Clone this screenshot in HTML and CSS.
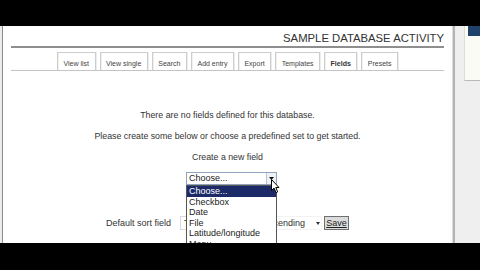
FILE: index.html
```html
<!DOCTYPE html>
<html>
<head>
<meta charset="utf-8">
<link rel="stylesheet" href="styles.css">
</head>
<body>
<div class="screen">
  <div class="bar"></div>
  <div class="stage">
    <main class="main">
      <h1 class="title">SAMPLE DATABASE ACTIVITY</h1>
      <div class="rule"></div>
      <nav class="tabs">
        <span class="tab">View list</span>
        <span class="tab">View single</span>
        <span class="tab">Search</span>
        <span class="tab">Add entry</span>
        <span class="tab">Export</span>
        <span class="tab">Templates</span>
        <span class="tab active">Fields</span>
        <span class="tab">Presets</span>
      </nav>
      <p class="msg first">There are no fields defined for this database.</p>
      <p class="msg">Please create some below or choose a predefined set to get started.</p>
      <p class="msg">Create a new field</p>
      <div class="create">
        <div class="select newfield">
          <span class="sel-text">Choose...</span>
          <span class="sel-btn"><svg width="5" height="3" viewBox="0 0 5 3"><path d="M0 0H5L2.5 3Z" fill="#111"/></svg></span>
          <ul class="dropdown">
            <li class="hl">Choose...</li>
            <li>Checkbox</li>
            <li>Date</li>
            <li>File</li>
            <li>Latitude/longitude</li>
            <li>Menu</li>
          </ul>
          <svg class="cursor" width="9" height="15" viewBox="0 0 9 15"><path d="M0.5 0.5V11.5L3 9L5 13.6L6.7 12.9L4.8 8.5H8Z" fill="#fff" stroke="#000" stroke-width="1"/></svg>
        </div>
      </div>
      <div class="sort">
        <span class="sort-label">Default sort field</span>
        <span class="field s1">Time added</span>
        <span class="field s2">Ascending<svg class="mini" width="4" height="3" viewBox="0 0 4 3"><path d="M0 0H4L2 3Z" fill="#333"/></svg></span>
        <button class="save">Save</button>
      </div>
    </main>
    <aside class="side">
      <div class="block"><div class="blue"></div></div>
    </aside>
  </div>
  <div class="bar"></div>
</div>
</body>
</html>
```
FILE: styles.css
```css
html, body {
  margin: 0;
  padding: 0;
  background: #000;
}
.screen {
  width: 480px;
  height: 270px;
  display: flex;
  flex-direction: column;
  font-family: "Liberation Sans", Arial, sans-serif;
  color: #333;
}
.bar {
  height: 26px;
  background: #000;
  flex: none;
}
.bar:last-child {
  height: 27px;
}
.stage {
  height: 217px;
  display: flex;
  background: #ececec;
  overflow: hidden;
  position: relative;
}
.main {
  margin-left: 2px;
  width: 451px;
  box-sizing: border-box;
  border-left: 1px solid #8c8c8c;
  border-right: 1px solid #dcdcdc;
  background: #fff;
  padding: 0 8px;
}
.title {
  margin: 0;
  padding-top: 6px;
  font-size: 11.3px;
  line-height: 13px;
  font-weight: normal;
  text-align: right;
  color: #333;
}
.rule {
  margin-top: 1px;
  height: 2px;
  background: #8e8e8e;
}
.tabs {
  margin-top: 4px;
  display: flex;
  justify-content: center;
  gap: 4px;
  border-bottom: 1px solid #c4c4c4;
}
.tab {
  height: 18px;
  box-sizing: border-box;
  padding: 6px 5.5px 0;
  border: 1px solid #cdcdcd;
  border-bottom: none;
  box-shadow: inset 1px 0 0 #f0f0f0, 1px 0 0 #ececec;
  font-size: 7px;
  line-height: 9px;
  color: #444;
  background: #fff;
}
.tab.active {
  font-weight: bold;
  color: #333;
}
.msg {
  margin: 10px 0 0;
  font-size: 8.8px;
  line-height: 11px;
  text-align: center;
  color: #333;
}
.msg.first {
  margin-top: 39px;
}
.create {
  margin-top: 9px;
  display: flex;
  justify-content: center;
  padding-left: 8px;
}
.select {
  position: relative;
  width: 91px;
  height: 13px;
  box-sizing: border-box;
  border: 1px solid #8fa3bd;
  display: flex;
  font-size: 9px;
  line-height: 11px;
  color: #222;
  background: #fff;
}
.sel-text {
  flex: 1;
  padding-left: 2px;
}
.sel-btn {
  width: 9px;
  border-left: 1px solid #b8c6d6;
  background: #eef2f6;
  display: flex;
  align-items: center;
  justify-content: center;
}
.dropdown {
  position: absolute;
  z-index: 2;
  left: -1px;
  top: 12px;
  width: 91px;
  box-sizing: border-box;
  margin: 0;
  padding: 0;
  list-style: none;
  border: 1px solid #555;
  background: #fff;
}
.dropdown li {
  height: 10.5px;
  line-height: 10.5px;
  padding-left: 2px;
  font-size: 9px;
  color: #222;
}
.dropdown li.hl {
  background: #1c2a68;
  color: #fff;
}
.cursor {
  position: absolute;
  z-index: 3;
  left: 84px;
  top: 6px;
}
.sort {
  margin-top: 31px;
  display: flex;
  justify-content: center;
  align-items: center;
  height: 14px;
  font-size: 9px;
  color: #333;
}
.sort-label {
  margin-right: 9px;
}
.field {
  height: 14px;
  box-sizing: border-box;
  border: 1px solid #dadada;
  line-height: 12px;
  padding-left: 3px;
  background: #fff;
  color: #333;
  display: flex;
  align-items: center;
}
.s1 {
  width: 79px;
}
.s2 {
  width: 63px;
  border-color: #f2f2f2;
}
.mini {
  margin-left: 11px;
}
.save {
  margin-left: 2px;
  width: 25px;
  height: 14px;
  padding: 0;
  border: 1px solid #6f6f6f;
  background: #dcdcdc;
  font-family: "Liberation Sans", Arial, sans-serif;
  font-size: 9px;
  line-height: 12px;
  color: #222;
  text-decoration: underline;
}
.side {
  flex: 1;
  border-left: 2px solid #b4b4b4;
  background: #efefef;
  padding-left: 9px;
}
.block {
  height: 55px;
  box-sizing: border-box;
  border-left: 1px solid #dcdcdc;
  border-bottom: 1px solid #b9b9b9;
  background: #fbfbf5;
  padding-left: 3px;
}
.blue {
  height: 10px;
  background: #20416a;
}
```
